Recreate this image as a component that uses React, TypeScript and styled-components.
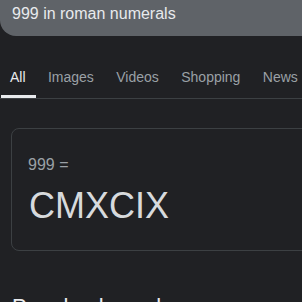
import React from "react";
import styled, { createGlobalStyle } from "styled-components";

const Global = createGlobalStyle`
  html, body {
    margin: 0;
    padding: 0;
    background: #202124;
    overflow: hidden;
  }
  body {
    font-family: Arial, "Liberation Sans", sans-serif;
    width: 302px;
    height: 302px;
  }
`;

const Page = styled.div`
  display: flex;
  flex-direction: column;
  width: 302px;
  overflow: hidden;
`;

const SearchBar = styled.div`
  height: 36px;
  box-sizing: border-box;
  padding: 4px 0 0 12px;
  background: #5f6368;
  border-bottom-left-radius: 16px;
  color: #e8eaed;
  font-size: 16px;
  line-height: 20px;
  white-space: nowrap;
`;

const TabRow = styled.nav`
  display: flex;
  gap: 3.4px;
  padding: 31px 0 0 1px;
  border-bottom: 1px solid #3c4043;
  white-space: nowrap;
`;

const Tab = styled.div<{ $active?: boolean }>`
  padding: 0 10px 8px 9px;
  font-size: 14px;
  line-height: 20px;
  color: ${(p) => (p.$active ? "#e8eaed" : "#9aa0a6")};
  border-bottom: 3px solid ${(p) => (p.$active ? "#e8eaed" : "transparent")};
  flex-shrink: 0;
`;

const Card = styled.div`
  margin: 29px 0 0 11px;
  width: 320px;
  flex-shrink: 0;
  box-sizing: border-box;
  border: 1px solid #3c4043;
  border-radius: 8px;
  padding: 26px 16px 22px;
`;

const Equation = styled.div`
  color: #9aa0a6;
  font-size: 16px;
  line-height: 20px;
`;

const Result = styled.div`
  margin-top: 9px;
  color: #d7dadd;
  font-size: 36px;
  line-height: 44px;
  padding-left: 1px;
`;

const Heading = styled.div`
  margin: 42px 0 0 12px;
  color: #e8eaed;
  font-size: 22px;
  line-height: 28px;
  white-space: nowrap;
`;

const tabs = ["All", "Images", "Videos", "Shopping", "News"];

export default function App() {
  return (
    <Page>
      <Global />
      <SearchBar>999 in roman numerals</SearchBar>
      <TabRow>
        {tabs.map((t, i) => (
          <Tab key={t} $active={i === 0}>
            {t}
          </Tab>
        ))}
      </TabRow>
      <Card>
        <Equation>999 =</Equation>
        <Result>CMXCIX</Result>
      </Card>
      <Heading>People also ask</Heading>
    </Page>
  );
}
